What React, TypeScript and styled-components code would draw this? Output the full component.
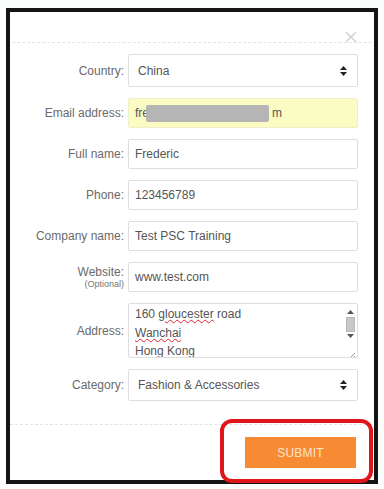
import React from "react";
import styled, { createGlobalStyle } from "styled-components";

const Global = createGlobalStyle`
  html, body { margin: 0; padding: 0; background: #fbfcfc; }
  body { font-family: "Liberation Sans", Arial, sans-serif; }
  * { box-sizing: border-box; }
`;

const Page = styled.div`
  width: 384px;
  height: 489px;
  padding: 8px 6px 5px 6px;
`;

const Frame = styled.div`
  position: relative;
  width: 372px;
  height: 476px;
  border: 4px solid #141414;
  background: #fff;
  display: flex;
  flex-direction: column;
`;

const Header = styled.div`
  height: 31px;
  margin: 0 2px;
  border-bottom: 1px dashed #e3e3e3;
  display: flex;
  justify-content: flex-end;
  align-items: flex-end;
  padding: 0 15px 0 0;
`;

const Close = styled.div`
  width: 12px;
  height: 12px;
  margin-bottom: -1px;
  display: flex;
`;

const Form = styled.div`
  display: grid;
  grid-template-columns: 114px 230px;
  column-gap: 4px;
  row-gap: 11px;
  padding: 11px 0 23px 0;
  border-bottom: 1px dashed #e3e3e3;
  margin: 0 2px 0 0;
`;

const Label = styled.div`
  font-size: 12px;
  color: #6a6a6a;
  text-align: right;
  display: flex;
  flex-direction: column;
  justify-content: center;
  align-items: flex-end;
  line-height: 14px;
`;

const SubLabel = styled.span`
  font-size: 9px;
  line-height: 11px;
  color: #777;
`;

const Field = styled.div<{ $h: number; $yellow?: boolean; $pl?: number }>`
  position: relative;
  height: ${(p) => p.$h}px;
  border: 1px solid ${(p) => (p.$yellow ? "#eef0c4" : "#dedede")};
  background: ${(p) => (p.$yellow ? "#fafcc4" : "#fff")};
  border-radius: 2px;
  font-size: 12px;
  color: #555;
  display: flex;
  align-items: center;
  padding-left: ${(p) => p.$pl ?? 6}px;
  padding-right: 10px;
`;

const Grow = styled.span`
  flex: 1;
`;

const Blur = styled.span`
  display: inline-block;
  width: 123px;
  height: 17px;
  background: #b5b5b5;
  border-radius: 2px;
  margin: 0 3px 0 -3px;
`;

const Area = styled.div`
  position: relative;
  height: 55px;
  border: 1px solid #dedede;
  border-radius: 2px;
  font-size: 12px;
  color: #555;
  padding: 1px 6px 0 6px;
  line-height: 18.5px;
  overflow: hidden;
`;

const Wavy = styled.span`
  text-decoration: underline wavy #d23;
  text-decoration-thickness: 1px;
  text-underline-offset: 1px;
`;

const Scroll = styled.div`
  position: absolute;
  right: 2px;
  top: 2px;
  width: 10px;
  height: 40px;
  display: flex;
  flex-direction: column;
  align-items: center;
`;

const Thumb = styled.div`
  width: 9px;
  height: 15px;
  background: #c8c8c8;
  border: 1px solid #b8b8b8;
  margin: 2px 0;
`;

const Grip = styled.div`
  position: absolute;
  right: 1px;
  bottom: 1px;
  width: 9px;
  height: 9px;
`;

const Footer = styled.div`
  display: flex;
  justify-content: flex-end;
  padding: 12px 18px 0 0;
`;

const Submit = styled.button`
  width: 111px;
  height: 31px;
  border: none;
  background: #f68b33;
  color: #fde3cc;
  font-family: "Liberation Sans", Arial, sans-serif;
  font-size: 12px;
  letter-spacing: 0.2px;
  padding: 0;
`;

const Highlight = styled.div`
  position: absolute;
  left: 210px;
  top: 407px;
  width: 153px;
  height: 64px;
  border: 4px solid #e0161b;
  border-radius: 12px;
  pointer-events: none;
`;

const Arrows = () => (
  <svg width="7" height="10" viewBox="0 0 7 10">
    <path d="M3.5 0 L7 4 L0 4 Z" fill="#222" />
    <path d="M3.5 10 L7 6 L0 6 Z" fill="#222" />
  </svg>
);

export default function App() {
  return (
    <>
      <Global />
      <Page>
        <Frame>
          <Header>
            <Close>
              <svg width="12" height="12" viewBox="0 0 12 12">
                <path d="M1 1 L11 11 M11 1 L1 11" stroke="#cfcfcf" strokeWidth="1.4" />
              </svg>
            </Close>
          </Header>
          <Form>
            <Label>Country:</Label>
            <Field $h={33} $pl={9}>
              <Grow>China</Grow>
              <Arrows />
            </Field>

            <Label>Email address:</Label>
            <Field $h={30} $yellow>
              <span>fre</span>
              <Blur />
              <span>m</span>
            </Field>

            <Label>Full name:</Label>
            <Field $h={30}>Frederic</Field>

            <Label>Phone:</Label>
            <Field $h={30}>123456789</Field>

            <Label>Company name:</Label>
            <Field $h={30}>Test PSC Training</Field>

            <Label>
              <span>Website:</span>
              <SubLabel>(Optional)</SubLabel>
            </Label>
            <Field $h={30}>www.test.com</Field>

            <Label>Address:</Label>
            <Area>
              <div>
                160 <Wavy>gloucester</Wavy> road
              </div>
              <div>
                <Wavy>Wanchai</Wavy>
              </div>
              <div>Hong Kong</div>
              <Scroll>
                <svg width="7" height="5" viewBox="0 0 7 5" style={{ marginTop: 4 }}>
                  <path d="M3.5 0 L7 4 L0 4 Z" fill="#555" />
                </svg>
                <Thumb />
                <svg width="7" height="5" viewBox="0 0 7 5">
                  <path d="M3.5 4 L7 0 L0 0 Z" fill="#555" />
                </svg>
              </Scroll>
              <Grip>
                <svg width="9" height="9" viewBox="0 0 9 9">
                  <path d="M8 2 L2 8 M8 5 L5 8" stroke="#999" strokeWidth="1" />
                </svg>
              </Grip>
            </Area>

            <Label>Category:</Label>
            <Field $h={32} $pl={9}>
              <Grow>Fashion &amp; Accessories</Grow>
              <Arrows />
            </Field>
          </Form>
          <Footer>
            <Submit>SUBMIT</Submit>
          </Footer>
          <Highlight />
        </Frame>
      </Page>
    </>
  );
}
